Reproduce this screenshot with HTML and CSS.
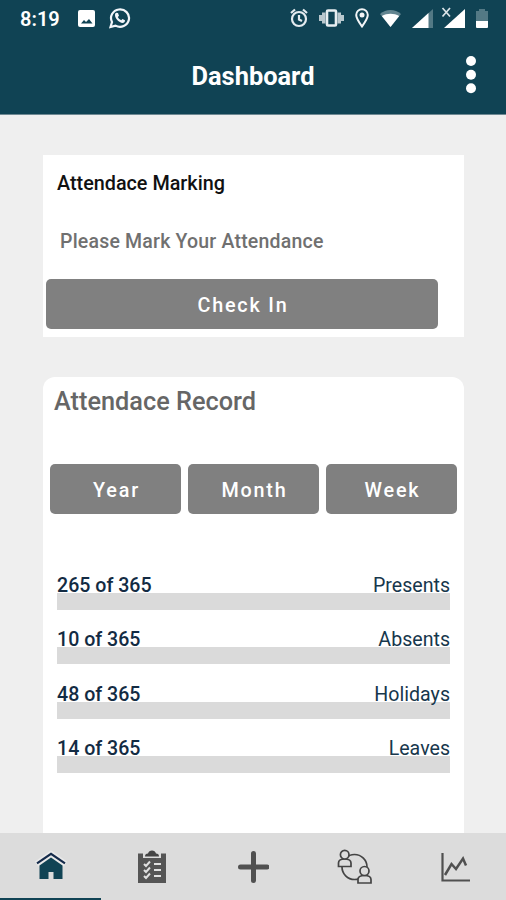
FILE: index.html
```html
<!DOCTYPE html>
<html lang="en">
<head>
<meta charset="utf-8">
<title>Dashboard</title>
<link rel="stylesheet" href="styles.css">
</head>
<body>
<div class="app">
  <header class="header">
    <div class="status">
      <span class="time">8:19</span>
      <svg class="photo" width="17" height="17" viewBox="0 0 17 17"><rect width="17" height="17" rx="2" fill="#fff"/><path d="M3 13.500L6 10L8 12L11 9L14.500 13.500Z" fill="#104354"/></svg>
      <svg class="chat" width="22" height="22" viewBox="0 0 22 22" fill="none" stroke="#f3f6fa"><path d="M1.500 20L3 15A9 8.700 0 1 1 6.500 18.600Z" stroke-width="2.200"/><path d="M7.300 5.800L9 6L10 8.800L8.800 10C9.500 11.500 10.600 12.500 12.200 13.200L13.500 12L16 13.300C16 15 15 15.900 13.600 16C10 15.600 6.100 11.700 6 8C6 7 6.500 6.100 7.300 5.800Z" fill="#f3f6fa" stroke="none"/></svg>
      <div class="system">
        <svg width="18" height="20" viewBox="0 0 18 20" fill="none" stroke="#e4ebef" stroke-width="2.200"><circle cx="9" cy="11" r="7"/><path d="M1 5L5 1.500M17 5L13 1.500M9 7V11.500L12 13"/></svg>
        <svg width="25" height="18" viewBox="0 0 25 18"><path d="M0 6H3V12H0ZM22 6H25V12H22ZM3 3.500H6.500V14.500H3ZM18.500 3.500H22V14.500H18.500Z" fill="#b9c8ce"/><rect x="8" y="1.500" width="9" height="15" rx="1" fill="none" stroke="#e7eef1" stroke-width="2.600"/></svg>
        <svg width="14" height="20" viewBox="0 0 14 20"><path d="M7 18.500C4.500 15 1.200 10.500 1.200 7A5.800 5.800 0 0 1 12.800 7C12.800 10.500 9.500 15 7 18.500Z" fill="none" stroke="#f2f5f7" stroke-width="2"/><circle cx="7" cy="7" r="2.500" fill="#f2f5f7"/></svg>
        <svg width="21" height="17" viewBox="0 0 21 17"><path d="M0 4C6-1.300 15-1.300 21 4L10.500 17Z" fill="#638590"/><path d="M1.800 6C7 3 14 3 19.200 6L10.500 17Z" fill="#fff"/></svg>
        <svg width="21" height="19" viewBox="0 0 21 19"><path d="M0 19L21 0V19Z" fill="#537985"/><path d="M0 19L16.500 4V19Z" fill="#fff"/></svg>
        <svg class="no-signal" width="21" height="19" viewBox="0 0 21 19"><path d="M0 19L21 0V19Z" fill="#fff"/><path d="M-1.500-1L6 7.500M6-1L-1.500 7.500" stroke="#dce5e9" stroke-width="1.700"/></svg>
        <svg width="12" height="19" viewBox="0 0 12 19"><path d="M3 0H9V2H12V12H0V2H3Z" fill="#537985"/><path d="M0 12H12V18Q12 19 11 19H1Q0 19 0 18Z" fill="#fff"/></svg>
      </div>
    </div>
    <div class="titlebar">
      <h1>Dashboard</h1>
      <svg class="more" width="10" height="38" viewBox="0 0 10 38" fill="#fff"><circle cx="5" cy="5" r="5"/><circle cx="5" cy="18.700" r="5"/><circle cx="5" cy="32.300" r="5"/></svg>
    </div>
  </header>
  <main class="content">
    <section class="marking">
      <h2>Attendace Marking</h2>
      <p>Please Mark Your Attendance</p>
      <button class="button check">Check In</button>
    </section>
    <section class="record">
      <h2>Attendace Record</h2>
      <div class="periods">
        <button class="button">Year</button>
        <button class="button">Month</button>
        <button class="button">Week</button>
      </div>
      <div class="stats">
        <div class="stat"><strong>265 of 365</strong><span>Presents</span></div>
        <div class="stat"><strong>10 of 365</strong><span>Absents</span></div>
        <div class="stat"><strong>48 of 365</strong><span>Holidays</span></div>
        <div class="stat"><strong>14 of 365</strong><span>Leaves</span></div>
      </div>
    </section>
  </main>
  <nav class="tabs">
    <a class="tab active"><svg width="32" height="34" viewBox="0 0 32 34"><path d="M1.500 14L16 4L30.500 14" fill="none" stroke="#e9e9e9" stroke-width="6"/><path d="M4.500 15.500L16 7.500L27.500 15.500V29H18.500V22H13.500V29H4.500Z" fill="#104354"/><path d="M2 13.300L16 3.800L30 13.300" fill="none" stroke="#152b4b" stroke-width="2.200"/></svg></a>
    <a class="tab"><svg width="32" height="34" viewBox="0 0 32 34"><path d="M2 3.500H30V33H2Z" fill="#555"/><path d="M7 2H25V8H7Z" fill="#dcdcdc"/><path d="M9 6.500Q9 3.500 12 3.500A4.200 4.200 0 0 1 20 3.500Q23 3.500 23 6.500Z" fill="#444"/><path d="M18 14H25M18 20H25M18 26H25M8 14L10 16L14 11.500M8 20L10 22L14 17.500M8 26L10 28L14 23.500" fill="none" stroke="#e1e1e1" stroke-width="2"/></svg></a>
    <a class="tab"><svg width="32" height="34" viewBox="0 0 32 34"><path d="M16.500 3.500V30.500M3.500 17H30" stroke="#505050" stroke-width="5" stroke-linecap="round"/></svg></a>
    <a class="tab"><svg width="36" height="36" viewBox="0 0 36 36" fill="none" stroke="#444" stroke-width="1.700"><circle cx="18.500" cy="18" r="12.500"/><path d="M2.500 17.500V14Q2.500 10 8.500 10Q15 10 15 14V17.500Z" fill="#dcdcdc"/><circle cx="8.700" cy="5.700" r="4.300" fill="#dcdcdc"/><path d="M22 34V30.500Q22 26.500 28.500 26.500Q35 26.500 35 30.500V34Z" fill="#dcdcdc"/><circle cx="28.500" cy="22" r="4.500" fill="#dcdcdc"/></svg></a>
    <a class="tab"><svg width="32" height="34" viewBox="0 0 32 34" fill="none" stroke="#505050" stroke-width="2.200"><path d="M3.500 3V30.500H31"/><path d="M6 25L12.500 14L17 19L24 8.500L27 15.500" stroke-width="2.500"/></svg></a>
  </nav>
</div>
</body>
</html>
```

FILE: styles.css
```css
* { box-sizing: border-box; }
body { margin: 0; font-family: Roboto, "Liberation Sans", sans-serif; }
h1, h2, p { margin: 0; }
.app { width: 506px; height: 900px; display: flex; flex-direction: column; background: #efefef; overflow: hidden; }
.header { height: 115px; flex: none; background: #104354; color: #fff; border-bottom: 1px solid #6f8993; }
.status { height: 36px; display: flex; align-items: center; padding: 0 18px 0 20px; }
.time { width: 58px; font-size: 20px; font-weight: 600; line-height: 36px; padding-top: 1px; }
.chat { margin-left: 14px; }
.system { margin-left: auto; display: flex; align-items: center; gap: 11px; }
.no-signal { overflow: visible; }
.titlebar { height: 79px; display: grid; grid-template-columns: 1fr auto 1fr; align-items: center; padding-right: 30px; padding-left: 30px; }
h1 { grid-column: 2; font-size: 25.400px; line-height: 30px; font-weight: 700; }
.more { justify-self: end; margin-bottom: 2px; }
.content { flex: 1; min-height: 0; padding: 40px 42px 0 43px; display: flex; flex-direction: column; gap: 40px; }
.marking { height: 182px; flex: none; background: #fff; padding: 17px 26px 8px 3px; display: flex; flex-direction: column; }
.marking h2 { margin-left: 11px; font-size: 19.800px; line-height: 24px; font-weight: 500; color: #111; }
.marking p { margin: 34px 0 0 14px; font-size: 19.500px; line-height: 24px; font-weight: 500; color: #707070; letter-spacing: .2px; }
.button { border: 0; border-radius: 5px; height: 50px; padding: 2px 0 0 2px; background: #808080; color: #fff; font: 500 19.800px Roboto, sans-serif; letter-spacing: 1.800px; }
.check { margin-top: 25px; }
.record { flex: 1; background: #fff; border-radius: 12px 12px 0 0; padding: 9px 7px 0; }
.record h2 { margin-left: 4px; font-size: 25.300px; line-height: 32px; font-weight: 500; color: #666; }
.periods { margin-top: 46px; display: grid; grid-template-columns: repeat(3, 1fr); gap: 7px; }
.stats { margin: 59px 7px 0; }
.stat { height: 54.300px; display: flex; justify-content: space-between; align-items: flex-start; font-size: 19.600px; line-height: 25px; background: linear-gradient(#dadada, #dadada) 0 20px / 100% 17px no-repeat; color: #17374c; }
.stat strong { font-weight: 500; color: #132b43; }
.tabs { height: 67px; flex: none; display: grid; grid-template-columns: repeat(5, 1fr); background: #dcdcdc; }
.tab { display: flex; align-items: center; justify-content: center; padding-top: 2px; border-bottom: 2px solid transparent; }
.active { border-color: #104354; }
```
